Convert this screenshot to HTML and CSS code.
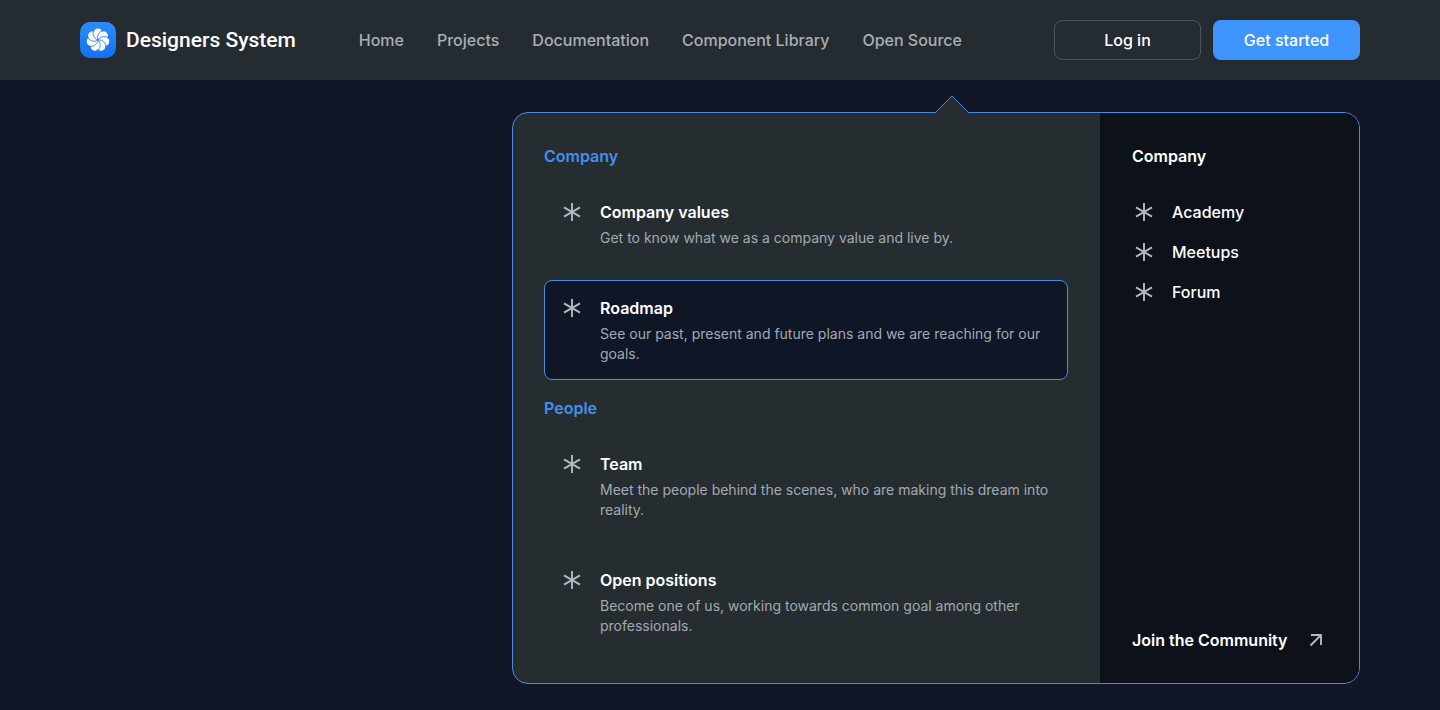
FILE: index.html
```html
<!DOCTYPE html>
<html lang="en">
<head>
<meta charset="utf-8">
<meta name="viewport" content="width=device-width, initial-scale=1">
<title>Designers System</title>
<link rel="stylesheet" href="styles.css">
</head>
<body>
<svg class="sprite" aria-hidden="true">
  <symbol id="asterisk" viewBox="0 0 24 24"><path d="M12 3v18M4 7.400l16 9.200M4 16.600l16-9.200" fill="none" stroke="currentColor" stroke-width="1.9"/></symbol>
  <symbol id="arrow" viewBox="0 0 24 24"><path d="M7 7h10v10M17 7L6.500 17.500" fill="none" stroke="currentColor" stroke-width="1.9"/></symbol>
</svg>
<header class="header">
  <a class="brand" href="#">
    <svg class="brand-mark" viewBox="0 0 36 36" aria-hidden="true">
      <defs>
        <linearGradient id="mark" x1="0" y1="0" x2="0" y2="1"><stop offset="0" stop-color="#2b8cfb"/><stop offset="1" stop-color="#1272f0"/></linearGradient>
        <circle id="lobe" cx="18" cy="10.500" r="3.900"/>
        <path id="curve" d="M18 18C15.200 15.600 14.900 11.600 18 7.200"/>
      </defs>
      <rect width="36" height="36" rx="10" fill="url(#mark)"/>
      <g fill="#fff">
        <circle cx="18" cy="18" r="8.600"/>
        <use href="#lobe"/>
        <use href="#lobe" transform="rotate(51.430 18 18)"/>
        <use href="#lobe" transform="rotate(102.860 18 18)"/>
        <use href="#lobe" transform="rotate(154.290 18 18)"/>
        <use href="#lobe" transform="rotate(205.710 18 18)"/>
        <use href="#lobe" transform="rotate(257.140 18 18)"/>
        <use href="#lobe" transform="rotate(308.570 18 18)"/>
      </g>
      <g fill="none" stroke="#1f7df5" stroke-width=".8">
        <use href="#curve" transform="rotate(25.710 18 18)"/>
        <use href="#curve" transform="rotate(77.140 18 18)"/>
        <use href="#curve" transform="rotate(128.570 18 18)"/>
        <use href="#curve" transform="rotate(180 18 18)"/>
        <use href="#curve" transform="rotate(231.430 18 18)"/>
        <use href="#curve" transform="rotate(282.860 18 18)"/>
        <use href="#curve" transform="rotate(334.290 18 18)"/>
      </g>
    </svg>
    <span class="brand-name">Designers System</span>
  </a>
  <nav class="nav" aria-label="Main">
    <a href="#">Home</a>
    <a href="#">Projects</a>
    <a href="#">Documentation</a>
    <a href="#">Component Library</a>
    <a href="#">Open Source</a>
  </nav>
  <div class="actions">
    <button class="button button-outline" type="button">Log in</button>
    <button class="button button-primary" type="button">Get started</button>
  </div>
</header>
<main class="page">
  <div class="menu">
    <svg class="menu-pointer" viewBox="0 0 36 18" aria-hidden="true"><path class="pointer-fill" d="M1 18L18 1L35 18Z"/><path class="pointer-line" d="M0 17.500H1.500L18 1L34.500 17.500H36"/></svg>
    <div class="menu-main">
      <h2 class="menu-heading accent">Company</h2>
      <a class="item" href="#">
        <svg class="icon" aria-hidden="true"><use href="#asterisk"/></svg>
        <span class="item-text"><span class="item-title">Company values</span><span class="item-note">Get to know what we as a company value and live by.</span></span>
      </a>
      <a class="item item-active" href="#">
        <svg class="icon" aria-hidden="true"><use href="#asterisk"/></svg>
        <span class="item-text"><span class="item-title">Roadmap</span><span class="item-note">See our past, present and future plans and we are reaching for our goals.</span></span>
      </a>
      <h2 class="menu-heading accent">People</h2>
      <a class="item" href="#">
        <svg class="icon" aria-hidden="true"><use href="#asterisk"/></svg>
        <span class="item-text"><span class="item-title">Team</span><span class="item-note">Meet the people behind the scenes, who are making this dream into reality.</span></span>
      </a>
      <a class="item" href="#">
        <svg class="icon" aria-hidden="true"><use href="#asterisk"/></svg>
        <span class="item-text"><span class="item-title">Open positions</span><span class="item-note">Become one of us, working towards common goal among other professionals.</span></span>
      </a>
    </div>
    <div class="menu-side">
      <h2 class="menu-heading">Company</h2>
      <ul class="links">
        <li><a class="link" href="#"><svg class="icon" aria-hidden="true"><use href="#asterisk"/></svg>Academy</a></li>
        <li><a class="link" href="#"><svg class="icon" aria-hidden="true"><use href="#asterisk"/></svg>Meetups</a></li>
        <li><a class="link" href="#"><svg class="icon" aria-hidden="true"><use href="#asterisk"/></svg>Forum</a></li>
      </ul>
      <a class="community" href="#">Join the Community<svg class="icon" aria-hidden="true"><use href="#arrow"/></svg></a>
    </div>
  </div>
</main>
</body>
</html>
```
FILE: styles.css
```css
* { box-sizing: border-box; }

body {
  margin: 0;
  background: #111726;
  color: #fff;
  font: 400 16px/24px Inter, "Liberation Sans", sans-serif;
}

a { color: inherit; text-decoration: none; }

.sprite { position: absolute; width: 0; height: 0; }

.icon { flex: none; width: 24px; height: 24px; color: #b4b8c1; }

.header {
  display: flex;
  align-items: center;
  padding: 20px 80px;
  background: #252c31;
}

.brand { display: flex; align-items: center; gap: 10px; }
.brand-mark { display: block; width: 36px; height: 36px; }
.brand-name { font: 500 21px/28px Roboto, sans-serif; white-space: nowrap; }

.nav {
  display: flex;
  gap: 33px;
  margin-left: 63px;
  color: #a9aeb6;
  font-weight: 500;
  white-space: nowrap;
}

.actions { display: flex; gap: 12px; margin-left: auto; }

.button {
  width: 147px;
  height: 40px;
  padding: 0;
  border: 1px solid transparent;
  border-radius: 8px;
  color: #fff;
  font: inherit;
  font-weight: 500;
}
.button-outline { border-color: #4b535c; background: transparent; }
.button-primary { background: #3f94fb; }

.page {
  display: flex;
  justify-content: flex-end;
  padding: 32px 80px 26px;
}

.menu {
  position: relative;
  display: flex;
  width: 100%;
  max-width: 848px;
  border: 1px solid #478ee0;
  border-radius: 16px;
  background: #252d31;
}

.menu-pointer {
  position: absolute;
  top: -18px;
  right: 389px;
  width: 36px;
  height: 18px;
}
.pointer-fill { fill: #252d31; }
.pointer-line { fill: none; stroke: #478ee0; }

.menu-main {
  display: flex;
  flex: 1;
  flex-direction: column;
  gap: 16px;
  padding: 31px 32px 31px 31px;
}

.menu-heading { margin: 0; font: inherit; font-weight: 600; }
.accent { color: #438fee; }

.item {
  display: flex;
  gap: 16px;
  padding: 15px;
  border: 1px solid transparent;
  border-radius: 8px;
}
.item-active { border-color: #478ee0; background: #0f1625; }
.item-text { display: flex; flex-direction: column; gap: 4px; }
.item-title { font-weight: 600; }
.item-note { color: #a3a9b1; font-size: 14px; line-height: 20px; }

.menu-side {
  display: flex;
  flex-direction: column;
  gap: 32px;
  width: 259px;
  padding: 31px;
  padding-left: 32px;
  border-radius: 0 15px 15px 0;
  background: #0d121a;
}

.links {
  display: grid;
  gap: 16px;
  margin: 0;
  padding: 0;
  list-style: none;
  font-weight: 500;
}
.link { display: flex; gap: 16px; }

.community {
  display: flex;
  gap: 16px;
  margin-top: auto;
  font-weight: 600;
  white-space: nowrap;
}
```
